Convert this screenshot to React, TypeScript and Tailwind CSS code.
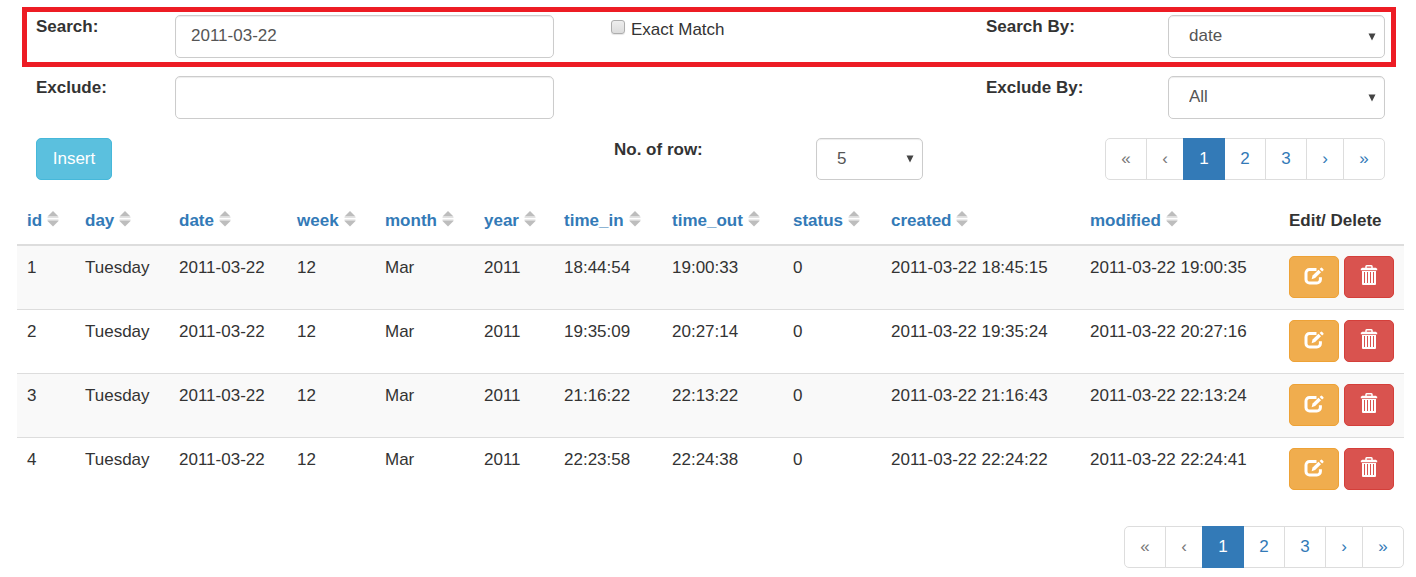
import React from "react";

type Row = {
  id: number;
  day: string;
  date: string;
  week: number;
  month: string;
  year: number;
  time_in: string;
  time_out: string;
  status: number;
  created: string;
  modified: string;
};

const base = { day: "Tuesday", date: "2011-03-22", week: 12, month: "Mar", year: 2011, status: 0 };

const rows: Row[] = [
  { ...base, id: 1, time_in: "18:44:54", time_out: "19:00:33", created: "2011-03-22 18:45:15", modified: "2011-03-22 19:00:35" },
  { ...base, id: 2, time_in: "19:35:09", time_out: "20:27:14", created: "2011-03-22 19:35:24", modified: "2011-03-22 20:27:16" },
  { ...base, id: 3, time_in: "21:16:22", time_out: "22:13:22", created: "2011-03-22 21:16:43", modified: "2011-03-22 22:13:24" },
  { ...base, id: 4, time_in: "22:23:58", time_out: "22:24:38", created: "2011-03-22 22:24:22", modified: "2011-03-22 22:24:41" },
];

// Column widths act as proportions: the fixed table layout scales them to the window.
const columns: { key: keyof Row; width: string }[] = [
  { key: "id", width: "w-[58px]" },
  { key: "day", width: "w-[94px]" },
  { key: "date", width: "w-[118px]" },
  { key: "week", width: "w-[88px]" },
  { key: "month", width: "w-[99px]" },
  { key: "year", width: "w-[80px]" },
  { key: "time_in", width: "w-[108px]" },
  { key: "time_out", width: "w-[121px]" },
  { key: "status", width: "w-[98px]" },
  { key: "created", width: "w-[199px]" },
  { key: "modified", width: "w-[199px]" },
];

const filterGrid = "grid grid-cols-[139fr_379fr_57fr_375fr_182fr_217fr] items-start";
const fieldStyle =
  "w-full min-w-0 rounded-[5px] border border-[#ccc] bg-white pb-[2px] text-[#555] shadow-[inset_0_1px_1px_rgba(0,0,0,0.075)] outline-none";

function SortIcon() {
  return (
    <svg width="12" height="16" viewBox="0 0 12 16" aria-hidden="true" className="mb-1 shrink-0">
      <path d="M6 0L11.5 5.5H.5z" fill="#bdbdbd" />
      <path d="M.5 6h11v1H.5z" fill="#e2e2e2" />
      <path d="M.5 8.5h11v1.5H.5z" fill="#d8d8d8" />
      <path d="M.5 10h11L6 15.5z" fill="#bdbdbd" />
    </svg>
  );
}

function EditIcon() {
  return (
    <svg width="20" height="18" viewBox="0 0 20 18" aria-hidden="true">
      <path
        d="M12.5 2.5H5.6A3.6 3.6 0 0 0 2 6.1v6.3A3.6 3.6 0 0 0 5.6 16h7.2a3.6 3.6 0 0 0 3.6-3.6v-2.2"
        fill="none"
        stroke="#fff"
        strokeWidth="3"
      />
      <path d="M7.6 12.2l1-3.7 5.9-5.7 2.5 2.5-5.9 5.8z" fill="#fff" />
      <path d="M15.6 2l1.1-1.1a1 1 0 0 1 1.5 0l1 1a1 1 0 0 1 0 1.5l-1.1 1.1z" fill="#fff" />
    </svg>
  );
}

function TrashIcon() {
  return (
    <svg width="18" height="20" viewBox="0 0 18 20" aria-hidden="true">
      <path d="M6 3V1.6A.9.9 0 0 1 6.9.8h4.2a.9.9 0 0 1 .9.8V3" fill="none" stroke="#fff" strokeWidth="1.5" />
      <path d="M2.2 2.8h13.6l1.4 1v1.4H.8V3.8z" fill="#fff" />
      <path
        d="M2 6h14v13a1 1 0 0 1-1 1H3a1 1 0 0 1-1-1zM4 7v11h1V7zM7 7v11h1V7zM10 7v11h1V7zM13 7v11h1V7z"
        fill="#fff"
        fillRule="evenodd"
      />
    </svg>
  );
}

function SelectBox({ id, options, height, initial }: { id: string; options: string[]; height: string; initial: string }) {
  return (
    <div className="relative">
      <select id={id} defaultValue={initial} className={`${fieldStyle} ${height} appearance-none px-5`}>
        {options.map((option) => (
          <option key={option}>{option}</option>
        ))}
      </select>
      <svg
        width="8"
        height="8"
        viewBox="0 0 8 8"
        aria-hidden="true"
        className="pointer-events-none absolute inset-y-0 right-[9px] my-auto"
      >
        <path d="M.5 .5h7L4 7.5z" fill="#444" />
      </svg>
    </div>
  );
}

function Pagination({ label }: { label: string }) {
  const item = "flex h-[42px] items-center justify-center border pb-[2px]";
  const plain = `${item} border-[#ddd] bg-white`;
  return (
    <nav aria-label={label} className="flex -space-x-px">
      <a href="#first" aria-label="First" className={`${plain} w-[42px] rounded-l-[5px] text-[#777]`}>«</a>
      <a href="#previous" aria-label="Previous" className={`${plain} w-[38px] text-[#777]`}>‹</a>
      <a href="#1" aria-current="page" className={`${item} relative w-[42px] border-[#337ab7] bg-[#337ab7] text-white`}>1</a>
      <a href="#2" className={`${plain} w-[42px] text-[#337ab7]`}>2</a>
      <a href="#3" className={`${plain} w-[42px] text-[#337ab7]`}>3</a>
      <a href="#next" aria-label="Next" className={`${plain} w-[38px] text-[#337ab7]`}>›</a>
      <a href="#last" aria-label="Last" className={`${plain} w-[42px] rounded-r-[5px] text-[#337ab7]`}>»</a>
    </nav>
  );
}

export default function App() {
  return (
    <main className="bg-white pt-[7px] pr-3 pb-2 pl-[17px] font-['Liberation_Sans',Arial,sans-serif] text-[17px] leading-[23px] text-[#333]">
      <form onSubmit={(event) => event.preventDefault()}>
        <div className={`${filterGrid} mr-2 ml-[5px] border-[5px] border-[#ed1c24] pt-[3px] pr-[6px] pb-1 pl-[9px]`}>
          <label htmlFor="search" className="font-bold">Search:</label>
          <input id="search" type="text" defaultValue="2011-03-22" className={`${fieldStyle} h-[43px] px-[15px]`} />
          <label className="col-start-4 flex items-start gap-[6px] pt-[3px]">
            <input
              type="checkbox"
              className="mt-[2px] size-[14px] appearance-none rounded-[3px] border border-[#adadad] bg-linear-to-b from-[#eee] to-[#dcdcdc] shadow-[0_1px_1px_rgba(0,0,0,0.1)] checked:bg-[#337ab7]"
            />
            <span>Exact Match</span>
          </label>
          <label htmlFor="search-by" className="font-bold">Search By:</label>
          <SelectBox id="search-by" height="h-[43px]" initial="date" options={["All", ...columns.map((c) => c.key)]} />
        </div>

        <div className={`${filterGrid} mt-[9px] mr-[19px] ml-[19px]`}>
          <label htmlFor="exclude" className="font-bold">Exclude:</label>
          <input id="exclude" type="text" className={`${fieldStyle} h-[43px] px-[15px]`} />
          <label htmlFor="exclude-by" className="col-start-5 font-bold">Exclude By:</label>
          <SelectBox id="exclude-by" height="h-[43px]" initial="All" options={["All", ...columns.map((c) => c.key)]} />
        </div>

        <div className="mx-[19px] mt-[19px] grid grid-cols-[578fr_202fr_107fr_462fr] items-start">
          <div>
            <button type="button" className="h-[42px] w-[76px] rounded-[5px] border border-[#46b8da] bg-[#5bc0de] pb-[2px] text-white">
              Insert
            </button>
          </div>
          <label htmlFor="row-count" className="font-bold">No. of row:</label>
          <SelectBox id="row-count" height="h-[42px]" initial="5" options={["5", "10", "20", "50"]} />
          <div className="flex justify-end">
            <Pagination label="Pages above the table" />
          </div>
        </div>
      </form>

      <table className="mt-[19px] w-full table-fixed border-separate border-spacing-0 text-left">
        <colgroup>
          {columns.map((column) => (
            <col key={column.key} className={column.width} />
          ))}
          <col className="w-[125px]" />
        </colgroup>
        <thead>
          <tr>
            {columns.map((column) => (
              <th key={column.key} className="border-b-2 border-[#ddd] px-[10px] pt-[10px] pb-3 whitespace-nowrap">
                <a href={`#sort-${column.key}`} className="flex items-center gap-[5px] text-[#337ab7]">
                  {column.key}
                  <SortIcon />
                </a>
              </th>
            ))}
            <th className="border-b-2 border-[#ddd] px-[10px] pt-[10px] pb-3 whitespace-nowrap">Edit/ Delete</th>
          </tr>
        </thead>
        <tbody className="[&>tr+tr>td]:border-t">
          {rows.map((row) => (
            <tr key={row.id} className="odd:bg-[#f9f9f9]">
              {columns.map((column) => (
                <td key={column.key} className="border-[#ddd] px-[10px] pt-[10px] align-top whitespace-nowrap">
                  {row[column.key]}
                </td>
              ))}
              <td className="border-[#ddd] px-[10px] pt-[10px] pb-[11px] align-top">
                <div className="flex gap-[5px]">
                  <button
                    type="button"
                    aria-label={`Edit row ${row.id}`}
                    className="flex h-[42px] w-[50px] items-center justify-center rounded-[5px] border border-[#eea236] bg-[#f0ad4e] pb-[2px]"
                  >
                    <EditIcon />
                  </button>
                  <button
                    type="button"
                    aria-label={`Delete row ${row.id}`}
                    className="flex h-[42px] w-[50px] items-center justify-center rounded-[5px] border border-[#d43f3a] bg-[#d9534f] pb-1"
                  >
                    <TrashIcon />
                  </button>
                </div>
              </td>
            </tr>
          ))}
        </tbody>
      </table>

      <div className="mt-[25px] flex justify-end">
        <Pagination label="Pages below the table" />
      </div>
    </main>
  );
}
